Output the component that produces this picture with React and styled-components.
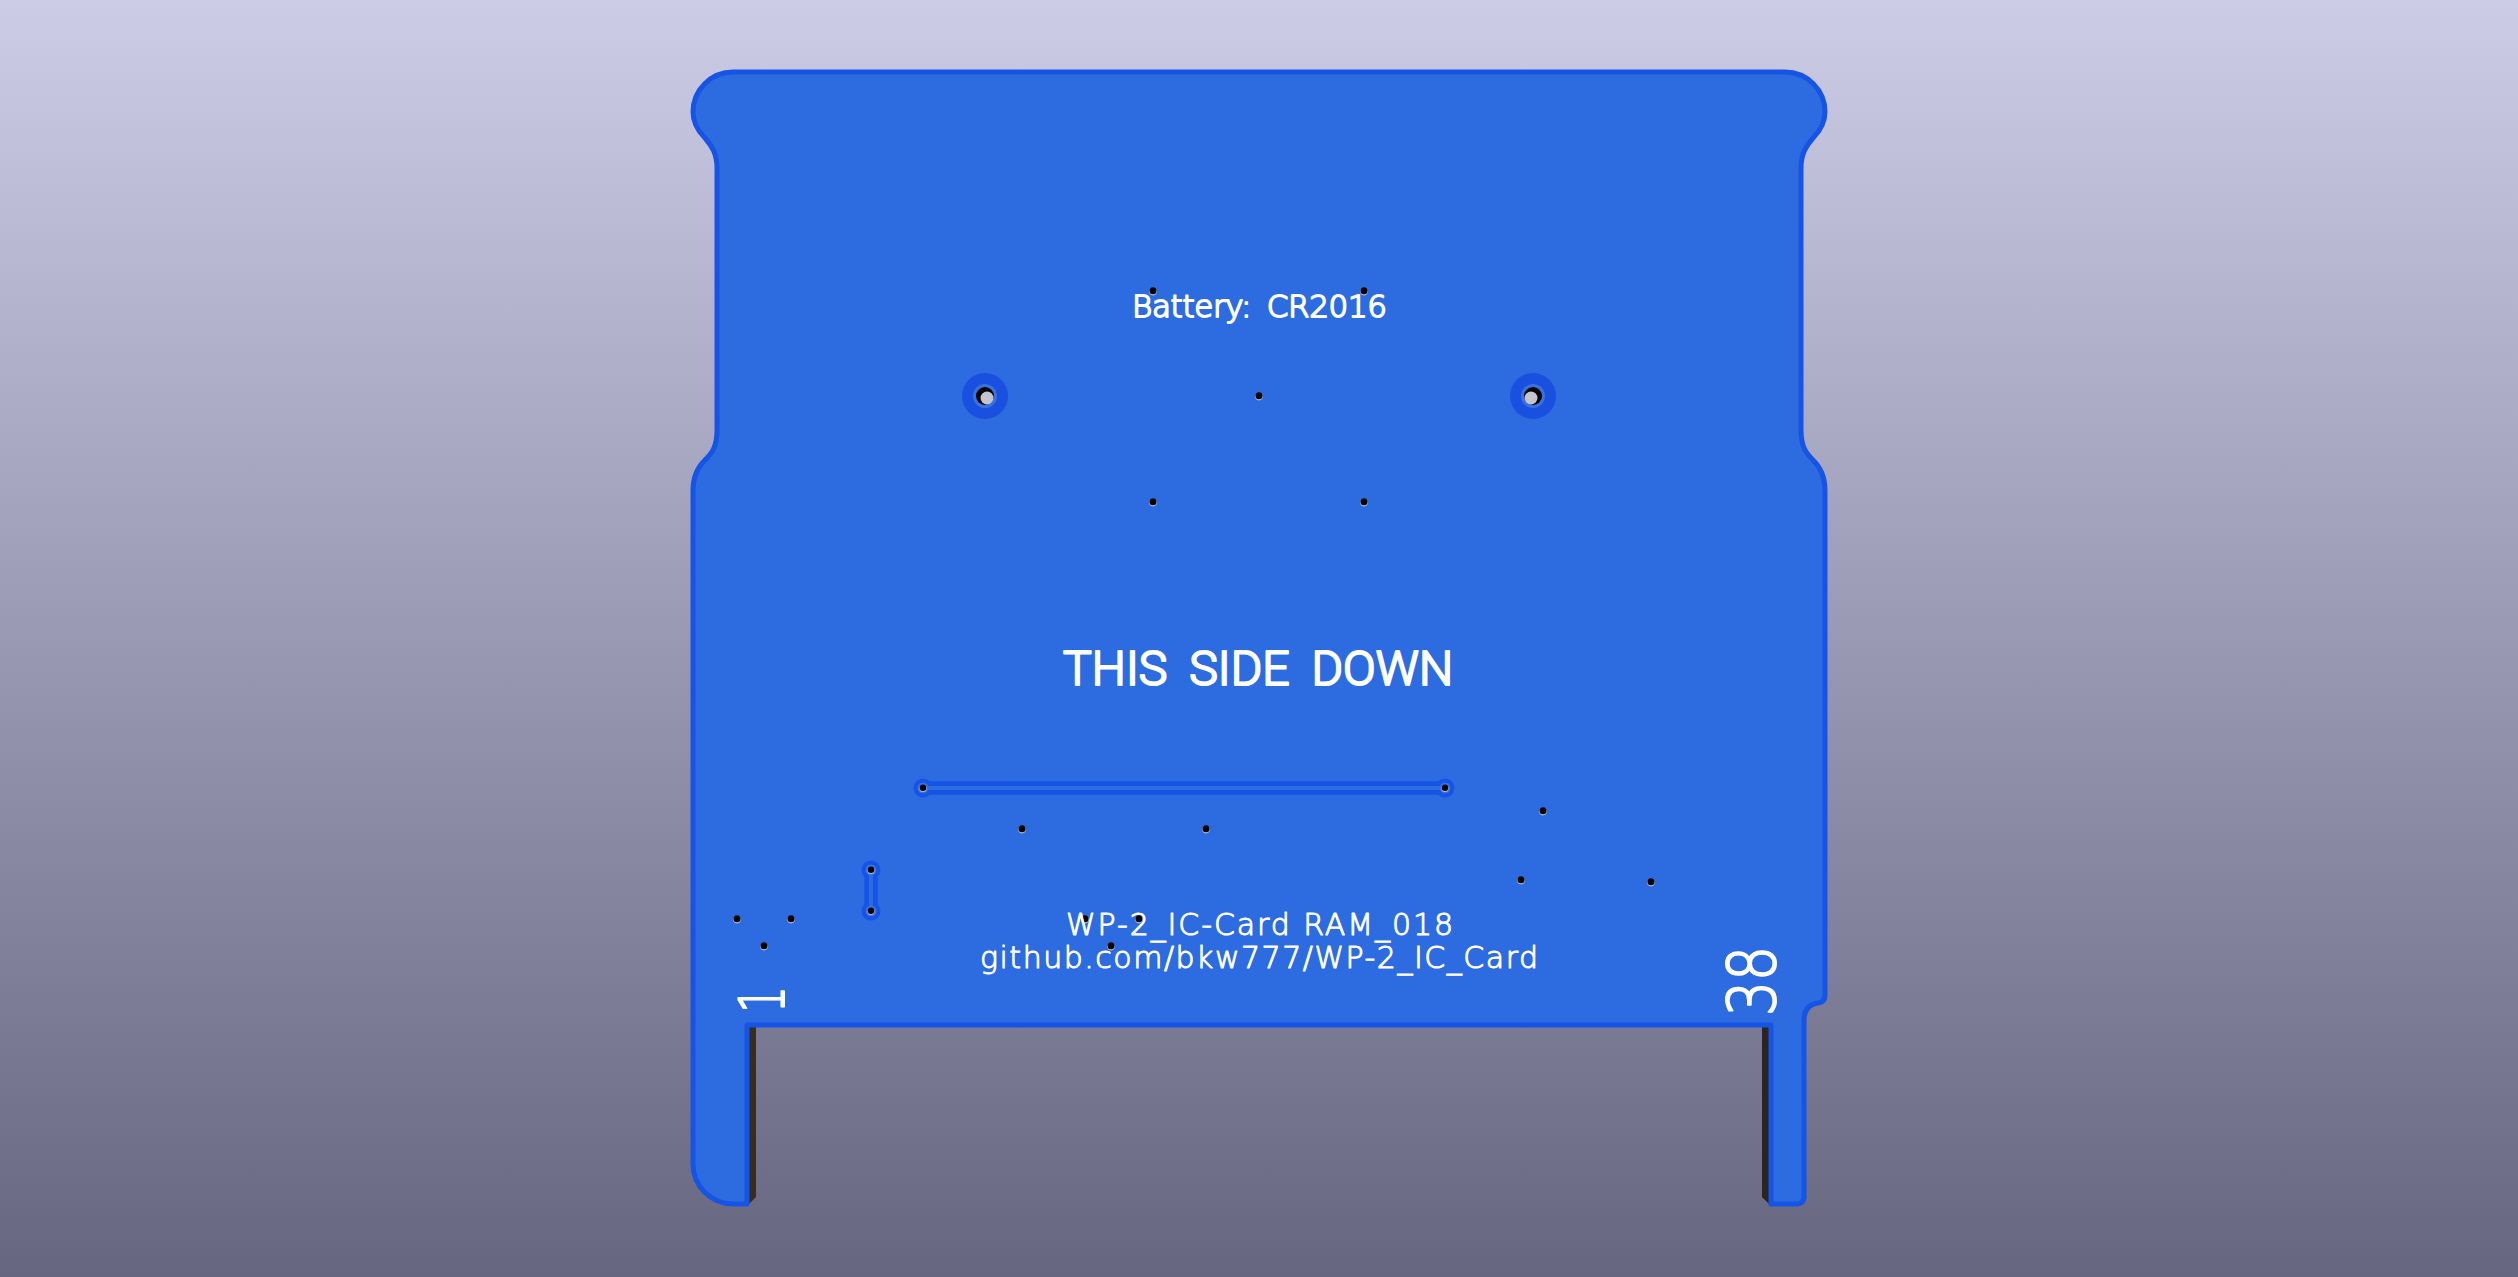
import styled, { createGlobalStyle } from 'styled-components';

const GlobalStyle = createGlobalStyle`
    html, body {
        margin: 0;
        padding: 0;
        overflow: hidden;
    }
`;

const Stage = styled.div`
    width: 100vw;
    height: 100vh;
    background: linear-gradient(to bottom, #cccce6 0%, #666680 100%);
`;

const BoardDrawing = styled.svg`
    display: block;
    width: 2518px;
    height: 1277px;
`;

const Outline = styled.path`
    fill: #2d6be0;
    stroke: #1654e6;
    stroke-width: 5;
    stroke-linejoin: round;
`;

const Edge = styled.polygon`
    fill: ${p => p.$tone};
`;

// thin glyphs fattened with a round stroke, close to the KiCad stroke font
const Silk = styled.text`
    fill: #ffffff;
    stroke: #ffffff;
    stroke-width: ${p => p.$pen}px;
    stroke-linejoin: round;
    stroke-linecap: round;
    font-family: ${p => p.$face || '"DejaVu Sans"'}, sans-serif;
    font-size: ${p => p.$size}px;
    font-weight: ${p => p.$weight || 200};
    word-spacing: ${p => p.$gap || 0}px;
`;

const Mask = styled.path`
    fill: none;
    stroke: #1654e6;
    stroke-linecap: round;
    stroke-width: 13.5;
`;

const Copper = styled.path`
    fill: none;
    stroke: #2d6be0;
    stroke-linecap: round;
    stroke-width: 4;
`;

const BOARD_PATH = `
    M 733 72 H 1785
    A 40 40 0 0 1 1825 112
    C 1825 122 1820 131 1813 138
    C 1806 146 1801 154 1801 168
    V 430
    C 1801 447 1806 453 1813 460
    C 1820 467 1825 476 1825 490
    V 996
    Q 1825 1002 1818 1003
    Q 1804 1005 1804 1020
    V 1196
    Q 1804 1204 1796 1204
    H 1771
    V 1025
    H 747
    V 1204
    H 733
    A 40 40 0 0 1 693 1164
    V 490
    C 693 476 698 467 705 460
    C 712 453 717 447 717 430
    V 168
    C 717 154 712 146 705 138
    C 698 131 693 122 693 112
    A 40 40 0 0 1 733 72
    Z
`;

const smallHoles = [
    [1153, 291], [1364, 291], [1259, 396], [1153, 502], [1364, 502],
    [1022, 829], [1206, 829], [1543, 811], [1521, 880], [1651, 882],
    [737, 919], [791, 919], [764, 946],
    [1085, 919], [1139, 919], [1111, 946],
];

function Hole({ x, y, r = 3.5 }) {
    return (
        <g>
            <circle cx={x} cy={y + 0.6} r={r + 0.3} fill="#b9bac8" />
            <circle cx={x} cy={y - 0.3} r={r} fill="#050505" />
        </g>
    );
}

function MountingVia({ x, y, flip }) {
    const dx = flip ? -2 : 2;
    return (
        <g>
            <circle cx={x} cy={y} r={23} fill="#1a50df" />
            <circle cx={x} cy={y} r={12} fill="#3a72dd" />
            <circle cx={x} cy={y} r={9} fill="#050505" />
            <circle cx={x + dx} cy={y + 2} r={6.5} fill="#c4c4d0" />
        </g>
    );
}

function Trace({ d, ends }) {
    return (
        <g>
            {ends.map(([x, y]) => <circle key={x + '-' + y} cx={x} cy={y} r={9.5} fill="#1654e6" />)}
            <Mask d={d} />
            <Copper d={d} />
            {ends.map(([x, y]) => <circle key={x + '+' + y} cx={x} cy={y} r={5.5} fill="#3a72dd" />)}
            {ends.map(([x, y]) => <Hole key={x + '*' + y} x={x} y={y} r={3.2} />)}
        </g>
    );
}

export default function App() {
    return (
        <Stage>
            <GlobalStyle />
            <BoardDrawing viewBox="0 0 2518 1277">
                <Edge $tone="#372d1e" points="747,1027 756,1027 756,1197 747,1206" />
                <Edge $tone="#2a2520" points="1762,1027 1771,1027 1771,1206 1762,1197" />
                <Outline d={BOARD_PATH} />

                <MountingVia x={985} y={396} />
                <MountingVia x={1533} y={396} flip />

                <Trace d="M 923 788 H 1445" ends={[[923, 788], [1445, 788]]} />
                <Trace d="M 871 870 V 911" ends={[[871, 870], [871, 911]]} />

                {smallHoles.map(([x, y]) => <Hole key={x + '_' + y} x={x} y={y} />)}

                <Silk x={1132} y={317} $size={31} $pen={1.8} $gap={6} textLength={255}>Battery: CR2016</Silk>
                <Silk x={1063} y={685} $face="Roboto" $weight={300} $size={48} $pen={2.2} $gap={10} textLength={390}>THIS SIDE DOWN</Silk>
                <Silk x={1066} y={935} $size={30} $pen={1} textLength={387}>WP-2_IC-Card RAM_018</Silk>
                <Silk x={980} y={968} $size={30} $pen={1} textLength={558}>github.com/bkw777/WP-2_IC_Card</Silk>
                <Silk transform="translate(784 1013) rotate(-90)" $size={62} $pen={2} textLength={27} lengthAdjust="spacingAndGlyphs">1</Silk>
                <Silk transform="translate(1775 1016) rotate(-90)" $size={65} $pen={2} textLength={70} lengthAdjust="spacingAndGlyphs">38</Silk>
            </BoardDrawing>
        </Stage>
    );
}
